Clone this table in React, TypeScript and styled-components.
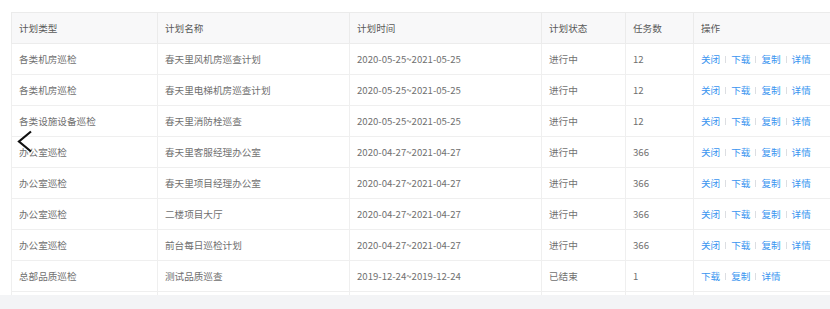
import React from "react";
import styled, { createGlobalStyle } from "styled-components";

const Global = createGlobalStyle`
  html, body { margin: 0; padding: 0; background: #ffffff; }
  body { font-family: "Noto Sans CJK SC", "Noto Sans", sans-serif; overflow: hidden; }
`;

const Page = styled.div`
  width: 830px;
  height: 309px;
  display: flex;
  flex-direction: column;
  position: relative;
  overflow: hidden;
`;

const TableArea = styled.div`
  height: 283px;
  padding: 12px 0 0 11px;
  overflow: hidden;
  flex: none;
`;

const Footer = styled.div`
  flex: 1;
  background: #f3f4f6;
`;

const Table = styled.table`
  width: 840px;
  border-collapse: collapse;
  table-layout: fixed;
  font-size: 9.6px;
  color: #707070;
`;

const Th = styled.th<{ $w?: number }>`
  ${(p) => (p.$w ? `width: ${p.$w}px;` : "")}
  height: 31px;
  padding: 0 0 0 7px;
  box-sizing: border-box;
  text-align: left;
  font-weight: normal;
  color: #5a5a5a;
  background: #f8f8f9;
  border: 1px solid #ebebeb;
  border-bottom-color: #ececec;
`;

const Td = styled.td`
  height: 31px;
  padding: 0 0 0 7px;
  box-sizing: border-box;
  border: 1px solid #efefef;
  white-space: nowrap;
`;

const Actions = styled.div`
  display: flex;
  align-items: center;
  gap: 5px;
`;

const Link = styled.a`
  color: #3a95f0;
  text-decoration: none;
  cursor: pointer;
`;

const Sep = styled.span`
  width: 1px;
  height: 7px;
  background: #dcdee2;
`;

const PrevArrow = styled.svg`
  position: absolute;
  left: 16px;
  top: 130px;
  width: 18px;
  height: 23px;
`;

type Row = {
  type: string;
  name: string;
  time: string;
  status: string;
  count: string;
  actions: string[];
};

const ALL = ["关闭", "下载", "复制", "详情"];

const rows: Row[] = [
  { type: "各类机房巡检", name: "春天里风机房巡查计划", time: "2020-05-25~2021-05-25", status: "进行中", count: "12", actions: ALL },
  { type: "各类机房巡检", name: "春天里电梯机房巡查计划", time: "2020-05-25~2021-05-25", status: "进行中", count: "12", actions: ALL },
  { type: "各类设施设备巡检", name: "春天里消防栓巡查", time: "2020-05-25~2021-05-25", status: "进行中", count: "12", actions: ALL },
  { type: "办公室巡检", name: "春天里客服经理办公室", time: "2020-04-27~2021-04-27", status: "进行中", count: "366", actions: ALL },
  { type: "办公室巡检", name: "春天里项目经理办公室", time: "2020-04-27~2021-04-27", status: "进行中", count: "366", actions: ALL },
  { type: "办公室巡检", name: "二楼项目大厅", time: "2020-04-27~2021-04-27", status: "进行中", count: "366", actions: ALL },
  { type: "办公室巡检", name: "前台每日巡检计划", time: "2020-04-27~2021-04-27", status: "进行中", count: "366", actions: ALL },
  { type: "总部品质巡检", name: "测试品质巡查", time: "2019-12-24~2019-12-24", status: "已结束", count: "1", actions: ["下载", "复制", "详情"] },
  { type: "", name: "", time: "", status: "", count: "", actions: [] },
];

export default function App() {
  return (
    <>
      <Global />
      <Page>
        <TableArea>
          <Table>
            <thead>
              <tr>
                <Th $w={146}>计划类型</Th>
                <Th $w={192}>计划名称</Th>
                <Th $w={192}>计划时间</Th>
                <Th $w={84}>计划状态</Th>
                <Th $w={68}>任务数</Th>
                <Th>操作</Th>
              </tr>
            </thead>
            <tbody>
              {rows.map((r, i) => (
                <tr key={i}>
                  <Td>{r.type}</Td>
                  <Td>{r.name}</Td>
                  <Td>{r.time}</Td>
                  <Td>{r.status}</Td>
                  <Td>{r.count}</Td>
                  <Td>
                    <Actions>
                      {r.actions.map((a, j) => (
                        <React.Fragment key={a}>
                          {j > 0 && <Sep />}
                          <Link>{a}</Link>
                        </React.Fragment>
                      ))}
                    </Actions>
                  </Td>
                </tr>
              ))}
            </tbody>
          </Table>
        </TableArea>
        <Footer />
        <PrevArrow viewBox="0 0 18 23">
          <polyline points="15,1.5 3,11.5 15,21.5" fill="none" stroke="#111" strokeWidth="2.2" />
        </PrevArrow>
      </Page>
    </>
  );
}
